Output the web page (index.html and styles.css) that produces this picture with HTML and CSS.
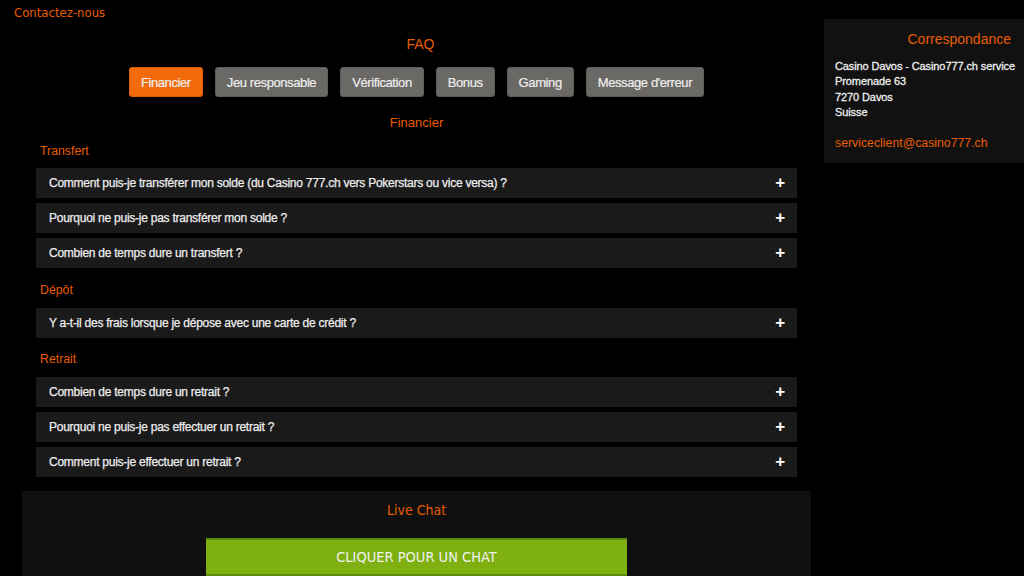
FILE: index.html
```html
<!DOCTYPE html>
<html lang="fr">
<head>
    <meta charset="UTF-8">
    <meta name="viewport" content="width=device-width, initial-scale=1.0">
    <title>FAQ - Contactez-nous</title>
    <link rel="stylesheet" href="styles.css">
</head>
<body>
    <div class="top-bar">Contactez-nous</div>
    <div class="page">
        <div class="main">
            <div class="faq">
                <h2 class="faq-title">FAQ</h2>
                <div class="tabs">
                    <button class="tab active">Financier</button>
                    <button class="tab">Jeu responsable</button>
                    <button class="tab">Vérification</button>
                    <button class="tab">Bonus</button>
                    <button class="tab">Gaming</button>
                    <button class="tab">Message d'erreur</button>
                </div>
                <h3 class="section-title">Financier</h3>

                <div class="category">Transfert</div>
                <div class="question">Comment puis-je transférer mon solde (du Casino 777.ch vers Pokerstars ou vice versa) ?<span class="plus">+</span></div>
                <div class="question">Pourquoi ne puis-je pas transférer mon solde ?<span class="plus">+</span></div>
                <div class="question">Combien de temps dure un transfert ?<span class="plus">+</span></div>

                <div class="category">Dépôt</div>
                <div class="question">Y a-t-il des frais lorsque je dépose avec une carte de crédit ?<span class="plus">+</span></div>

                <div class="category">Retrait</div>
                <div class="question">Combien de temps dure un retrait ?<span class="plus">+</span></div>
                <div class="question">Pourquoi ne puis-je pas effectuer un retrait ?<span class="plus">+</span></div>
                <div class="question">Comment puis-je effectuer un retrait ?<span class="plus">+</span></div>
            </div>

            <div class="live-chat">
                <h3 class="chat-title">Live Chat</h3>
                <button class="chat-button">CLIQUER POUR UN CHAT</button>
            </div>
        </div>

        <div class="sidebar">
            <h3 class="sidebar-title">Correspondance</h3>
            <p class="address">
                Casino Davos - Casino777.ch service<br>
                Promenade 63<br>
                7270 Davos<br>
                Suisse
            </p>
            <a class="email" href="#">serviceclient@casino777.ch</a>
        </div>
    </div>
</body>
</html>
```

FILE: styles.css
```css
body {
    margin: 0;
    background-color: #000;
    font-family: 'Liberation Sans', Arial, sans-serif;
    color: #eee;
    overflow: hidden;
}
.top-bar {
    height: 19px;
    padding-left: 14px;
    line-height: 26px;
    font-family: 'Liberation Sans Narrow', 'DejaVu Sans Condensed', sans-serif;
    font-size: 13px;
    color: #e85d04;
}
.page {
    display: flex;
    align-items: flex-start;
}
.main {
    width: 789px;
    margin-left: 22px;
}
.faq {
    padding: 0 14px;
}
.faq-title {
    margin: 15px 0 0;
    padding-left: 8px;
    font-size: 14px;
    font-weight: normal;
    line-height: 20px;
    text-align: center;
    color: #e85d04;
}
.tabs {
    display: flex;
    justify-content: center;
    gap: 12px;
    margin-top: 13px;
}
.tab {
    height: 30px;
    padding: 0 11px;
    font-family: 'Liberation Sans', Arial, sans-serif;
    font-size: 13px;
    letter-spacing: -0.4px;
    color: #eee;
    -webkit-text-stroke: 0.2px #eee;
    background-color: #6b6965;
    border: 1px solid #5d5b58;
    border-radius: 3px;
    cursor: pointer;
}
.tab.active {
    background-color: #f26b0b;
    border-color: #e06008;
}
.section-title {
    margin: 16px 0 0;
    font-size: 13px;
    font-weight: normal;
    line-height: 20px;
    text-align: center;
    color: #e85d04;
}
.category {
    margin: 9px 0 8px 4px;
    font-size: 12.3px;
    line-height: 18px;
    color: #e85d04;
}
.category ~ .category {
    margin-top: 12.5px;
    margin-bottom: 9px;
}
.question {
    display: flex;
    justify-content: space-between;
    align-items: center;
    height: 30px;
    margin-bottom: 5px;
    padding: 0 13px;
    font-size: 12px;
    letter-spacing: -0.25px;
    color: #eee;
    -webkit-text-stroke: 0.25px #eee;
    background-color: #1a1a1a;
}
.plus {
    font-size: 17px;
    font-weight: bold;
    color: #fff;
    -webkit-text-stroke: 0;
    margin-right: -1px;
}
.live-chat {
    margin-top: 14px;
    padding: 9px 0 1px;
    background-color: #0f0f0f;
    text-align: center;
}
.chat-title {
    margin: 0;
    font-family: 'Liberation Sans Narrow', 'DejaVu Sans Condensed', sans-serif;
    font-size: 14px;
    font-weight: normal;
    line-height: 20px;
    color: #e85d04;
}
.chat-button {
    width: 421px;
    height: 38px;
    margin-top: 18px;
    font-family: 'Liberation Sans Narrow', 'DejaVu Sans Condensed', sans-serif;
    font-size: 14.5px;
    color: #f2f2f2;
    background-color: #7db010;
    border: none;
    border-top: 2px solid #5c8a0a;
    border-bottom: 2px solid #5c8a0a;
    cursor: pointer;
}
.sidebar {
    width: 189px;
    margin-left: 13px;
    padding: 11px 0 13px 11px;
    background-color: #111;
    font-size: 11px;
}
.sidebar-title {
    margin: 0 13px 0 0;
    font-size: 14px;
    font-weight: normal;
    line-height: 18px;
    text-align: right;
    color: #e85d04;
}
.address {
    margin: 11px 0 16px;
    line-height: 15.33px;
    letter-spacing: -0.1px;
    white-space: nowrap;
    color: #eee;
    -webkit-text-stroke: 0.3px #eee;
}
.email {
    font-size: 12.3px;
    color: #e85d04;
    text-decoration: none;
}
```
